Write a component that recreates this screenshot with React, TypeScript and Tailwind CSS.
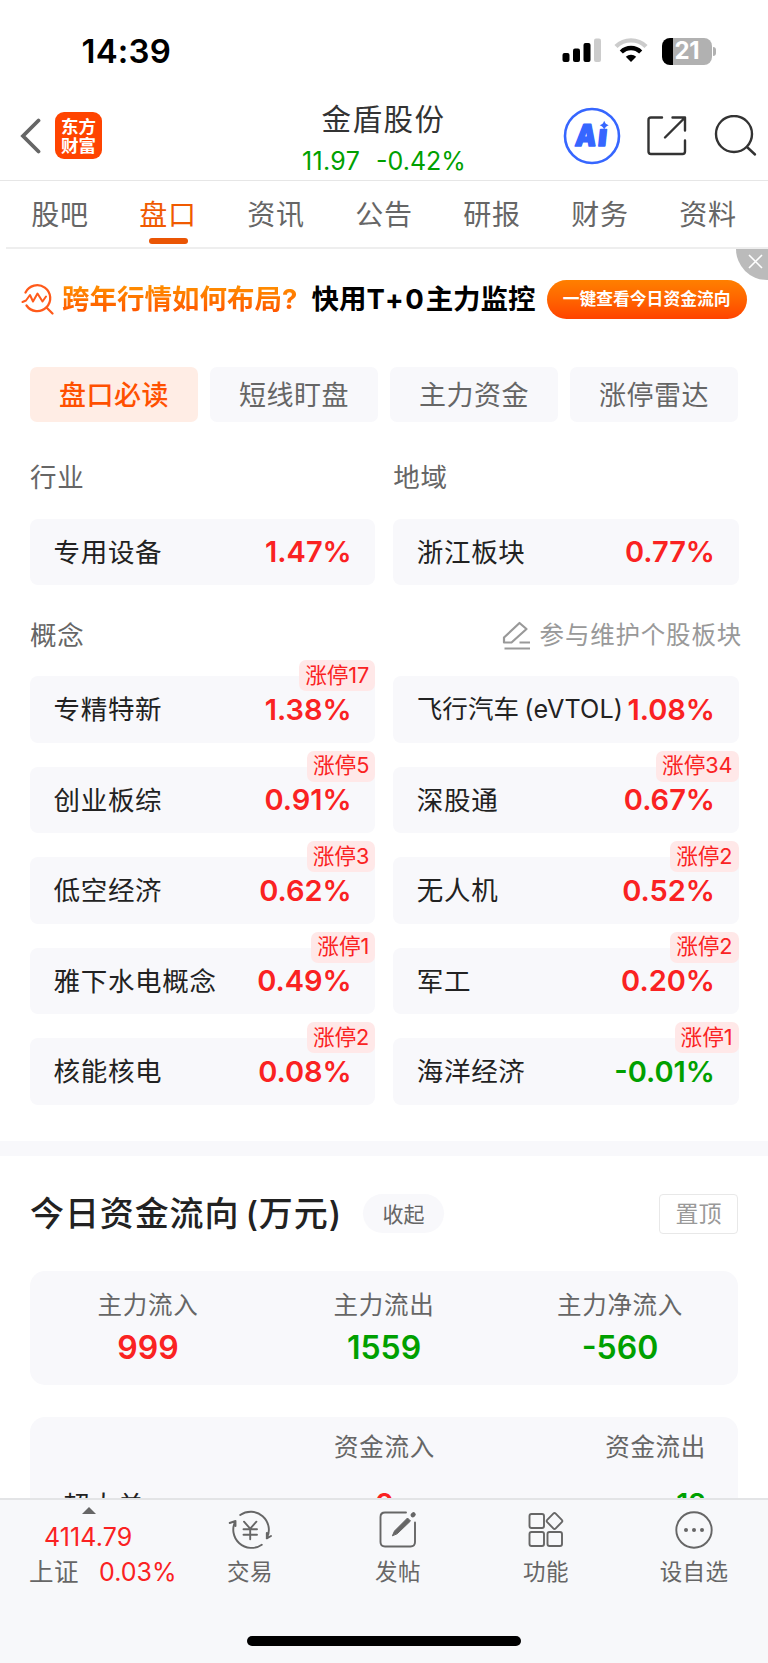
import type { ReactNode } from "react";
import clsx from "clsx";

const TABS = ["股吧", "盘口", "资讯", "公告", "研报", "财务", "资料"];
const FILTERS = ["盘口必读", "短线盯盘", "主力资金", "涨停雷达"];

interface Board {
    name: string;
    suffix?: string;
    change: string;
    limitUp?: number;
}

const CONCEPTS: Board[] = [
    { name: "专精特新", change: "1.38%", limitUp: 17 },
    { name: "飞行汽车", suffix: "(eVTOL)", change: "1.08%" },
    { name: "创业板综", change: "0.91%", limitUp: 5 },
    { name: "深股通", change: "0.67%", limitUp: 34 },
    { name: "低空经济", change: "0.62%", limitUp: 3 },
    { name: "无人机", change: "0.52%", limitUp: 2 },
    { name: "雅下水电概念", change: "0.49%", limitUp: 1 },
    { name: "军工", change: "0.20%", limitUp: 2 },
    { name: "核能核电", change: "0.08%", limitUp: 2 },
    { name: "海洋经济", change: "-0.01%", limitUp: 1 },
];

const FLOWS = [
    { label: "主力流入", value: "999", up: true },
    { label: "主力流出", value: "1559", up: false },
    { label: "主力净流入", value: "-560", up: false },
];

function StatusBar() {
    return (
        <div className="flex h-[102px] items-center justify-between pl-[81.5px] pr-[52px]">
            <span className="pt-[1px] text-[33px] font-semibold leading-none tracking-[0.2px] text-black">14:39</span>
            <div className="flex items-center">
                <svg width="40" height="26" viewBox="0 0 40 26">
                    <rect x="0.5" y="15" width="7" height="9" rx="2" fill="#000" />
                    <rect x="11" y="10.5" width="7" height="13.5" rx="2" fill="#000" />
                    <rect x="21.5" y="5" width="7" height="19" rx="2" fill="#000" />
                    <rect x="32" y="0.5" width="7" height="23.5" rx="2" fill="#ccc" />
                </svg>
                <svg className="ml-[12px]" width="34" height="26" viewBox="0 0 34 26" fill="none">
                    <path d="M2 8.5a21.5 21.5 0 0 1 30 0" stroke="#ccc" strokeWidth="4.4" />
                    <path d="M7.3 14a13.8 13.8 0 0 1 19.4 0" stroke="#000" strokeWidth="4.4" />
                    <path d="M17 24l-5.2-5.2a7.4 7.4 0 0 1 10.4 0z" fill="#000" />
                </svg>
                <div className="ml-[14px] flex items-center">
                    <div className="flex h-[27px] w-[50px] items-center justify-center rounded-[8px] bg-[linear-gradient(to_right,#000_11px,#b1b1b1_11px)]">
                        <span className="text-[24px] font-bold leading-none tracking-[-0.2px] text-white">21</span>
                    </div>
                    <div className="ml-[1px] h-[9px] w-[3px] rounded-r-full bg-[#b1b1b1]" />
                </div>
            </div>
        </div>
    );
}

function Header() {
    return (
        <header className="flex h-[79px] items-start border-b border-[#e6e6e6]">
            <div className="flex w-[250px] items-center pl-[20px] pt-[10px]">
                <svg width="21" height="36" viewBox="0 0 21 36" fill="none" stroke="#666" strokeWidth="3.8">
                    <path d="M18.5 2.5L3 18 18.5 33.5" strokeLinecap="round" />
                </svg>
                <div className="ml-[14px] flex h-[47px] w-[47px] flex-col items-center justify-center rounded-[9px] bg-[#ff4400] text-[17.5px] font-bold leading-[19px] text-white">
                    <span>东方</span>
                    <span>财富</span>
                </div>
            </div>
            <div className="flex w-[267px] flex-col items-center">
                <div className="text-[29.5px] leading-[34px] tracking-[1.5px] text-[#333]">金盾股份</div>
                <div className="mt-[11px] flex gap-[16px] pl-[1px] text-[25px] leading-[28px] text-[#00a000]">
                    <span className="tracking-[0.3px]">11.97</span>
                    <span>-0.42%</span>
                </div>
            </div>
            <div className="flex items-center pl-[46px] pt-[5px]">
                <svg width="58" height="58" viewBox="0 0 58 58">
                    <circle cx="29" cy="29" r="27" fill="none" stroke="#3666ff" strokeWidth="2.6" />
                    <g fill="#3666ff" stroke="#3666ff" strokeWidth="1.6" strokeLinejoin="round" fontFamily="Inter" fontWeight="900" fontSize="30" transform="skewX(-6)">
                        <text x="15.5" y="39" textLength="21" lengthAdjust="spacingAndGlyphs">A</text>
                        <text x="38.5" y="39.5">ı</text>
                    </g>
                    <path d="M41.2 13.8q1 3.5 4.5 4.5q-3.5 1-4.5 4.5q-1-3.5-4.5-4.5q3.5-1 4.5-4.5z" fill="#3666ff" />
                </svg>
                <svg className="ml-[25px]" width="42" height="42" viewBox="0 0 42 42" fill="none" stroke="#333" strokeWidth="2.4" strokeLinecap="round" strokeLinejoin="round">
                    <path d="M16 2.5H5Q2.5 2.5 2.5 5V36.500Q2.5 39 5 39H36.500Q39 39 39 36.500V25.500" />
                    <path d="M26.5 2.500H39V15.500M39 2.500L19 22.500" />
                </svg>
                <svg className="ml-[25.5px]" width="44" height="42" viewBox="0 0 44 42" fill="none" stroke="#333" strokeWidth="2.4" strokeLinecap="round">
                    <circle cx="20" cy="19" r="18" />
                    <path d="M33 32l8 7.5" />
                </svg>
            </div>
        </header>
    );
}

function Tabs() {
    return (
        <nav className="ml-[6px] flex h-[68px] border-b-2 border-[#eee]">
            {TABS.map((tab, i) => (
                <div
                    key={tab}
                    className={clsx("flex w-[108px] flex-col items-center", i === 1 ? "text-[#f05a00]" : "text-[#666]")}
                >
                    <span className="mt-[14px] text-[28px] leading-[40px] tracking-[0.8px]">{tab}</span>
                    {i === 1 && <span className="mt-[3px] h-[6px] w-[39px] rounded-[3px] bg-[#ea5504]" />}
                </div>
            ))}
        </nav>
    );
}

function Banner() {
    return (
        <div className="relative flex h-[100px] items-center pl-[20px]">
            <svg width="36" height="34" viewBox="0 0 36 34" fill="none" stroke="#ff5a1a" strokeWidth="2.3" strokeLinecap="round">
                <path d="M5.5 10.5A13 13 0 1 1 6.5 23.500M27 26l5.5 5.5" />
                <path d="M2.5 20l3.5-1.5 4-5.5 3 6.5 4.5-8 5 8 3.5-5" strokeWidth="2" strokeLinejoin="round" />
            </svg>
            <div className="ml-[6px] bg-gradient-to-b from-[#ff9500] to-[#ff4a00] bg-clip-text text-[27.5px] font-bold leading-[34px] text-transparent">
                跨年行情如何布局?
            </div>
            <div className="ml-[14px] whitespace-nowrap text-[27.5px] font-bold leading-[34px] text-black">
                快用<span className="tracking-[1.7px]">T+0</span>主力监控
            </div>
            <div className="ml-[11px] flex h-[39px] w-[200px] shrink-0 items-center justify-center rounded-full bg-gradient-to-b from-[#ff7f00] to-[#ff4200] text-[16.8px] font-bold leading-none text-white">
                一键查看今日资金流向
            </div>
            <div className="absolute right-0 top-0 flex h-[31px] w-[32px] items-center justify-center rounded-bl-full bg-[#bbb] pb-[6px] pl-[7px]">
                <svg width="15" height="15" viewBox="0 0 15 15" stroke="#fff" strokeWidth="1.6">
                    <path d="M1 1l13 13M14 1L1 14" />
                </svg>
            </div>
        </div>
    );
}

function BoardCard({ name, suffix, change, limitUp }: Board) {
    return (
        <div className="relative flex h-[66.5px] items-center justify-between rounded-[8px] bg-[#f8f8fb] pl-[23.5px] pr-[23.5px]">
            <span
                className={clsx(
                    "whitespace-nowrap leading-none text-[#222]",
                    suffix ? "text-[25.5px] tracking-[0.1px]" : "text-[26.5px] tracking-[0.7px]"
                )}
            >
                {name}
                {suffix && <span className="ml-[5px] text-[25.2px]">{suffix}</span>}
            </span>
            <span
                className={clsx(
                    "whitespace-nowrap text-[29px] font-semibold leading-none",
                    change.startsWith("-") ? "text-[#00a000]" : "text-[#fa2222]"
                )}
            >
                {change}
            </span>
            {limitUp !== undefined && (
                <span className="absolute -top-[16px] right-0 flex h-[31px] items-center rounded-[7px] bg-[#ffe8e8] px-[6px] text-[21.7px] leading-none tracking-[-0.1px] text-[#fa2222]">
                    涨停{limitUp}
                </span>
            )}
        </div>
    );
}

function Boards() {
    return (
        <section className="px-[30px]">
            <div className="mt-[17.5px] grid w-[708px] grid-cols-4 gap-[12px]">
                {FILTERS.map((f, i) => (
                    <div
                        key={f}
                        className={clsx(
                            "flex h-[55px] items-center justify-center rounded-[7px] pt-[3px] text-[27px] leading-none tracking-[0.5px]",
                            i === 0 ? "bg-[#ffede5] font-medium text-[#ff5000]" : "bg-[#f8f8fb] text-[#666]"
                        )}
                    >
                        {f}
                    </div>
                ))}
            </div>
            <div className="mt-[37px] grid w-[708.5px] grid-cols-2 gap-x-[18px] text-[26.5px] leading-[36px] tracking-[0.7px] text-[#666]">
                <span>行业</span>
                <span>地域</span>
            </div>
            <div className="mt-[24px] grid w-[708.5px] grid-cols-2 gap-x-[18px]">
                <BoardCard name="专用设备" change="1.47%" />
                <BoardCard name="浙江板块" change="0.77%" />
            </div>
            <div className="mt-[32px] flex h-[36px] w-[712px] items-center justify-between">
                <span className="text-[26.5px] leading-none tracking-[0.7px] text-[#666]">概念</span>
                <div className="flex items-center text-[24.5px] leading-none tracking-[0.8px] text-[#999]">
                    <svg className="mr-[9px]" width="29" height="29" viewBox="0 0 29 29" fill="none" stroke="#999" strokeWidth="2.2" strokeLinejoin="round">
                        <path d="M17.5 2L24.5 8 9.5 21.500H2V16.500z" />
                        <path d="M17.5 21.500H28M2.5 27.500H28" />
                    </svg>
                    参与维护个股板块
                </div>
            </div>
            <div className="mt-[23px] grid w-[708.5px] grid-cols-2 gap-x-[18px] gap-y-[24px]">
                {CONCEPTS.map((c) => (
                    <BoardCard key={c.name} {...c} />
                ))}
            </div>
        </section>
    );
}

function CapitalFlow() {
    return (
        <section className="px-[30px]">
            <div className="mt-[37.5px] flex h-[40px] items-center">
                <h2 className="whitespace-nowrap pt-[1px] text-[34px] font-medium leading-none tracking-[0.9px] text-[#222]">
                    今日资金流向<span className="ml-[6px]">(万元)</span>
                </h2>
                <span className="ml-[21px] flex h-[39px] w-[81px] items-center justify-center rounded-full bg-[#f8f8fb] pt-[1px] text-[21px] leading-none text-[#666]">
                    收起
                </span>
                <span className="ml-auto flex h-[40px] w-[79px] items-center justify-center rounded-[4px] border-[1.5px] border-[#e8e8e8] pt-[1px] text-[23px] leading-none text-[#999]">
                    置顶
                </span>
            </div>
            <div className="mt-[37px] grid h-[114px] grid-cols-3 rounded-[15px] bg-[#f8f8fb] pt-[16px] text-center">
                {FLOWS.map((f) => (
                    <div key={f.label}>
                        <div className="text-[24.5px] leading-[36px] tracking-[0.7px] text-[#666]">{f.label}</div>
                        <div className={clsx("mt-[5px] text-[32px] font-semibold leading-[40px]", f.up ? "text-[#fa2222]" : "text-[#00a000]")}>
                            {f.value}
                        </div>
                    </div>
                ))}
            </div>
            <div className="mt-[32px] h-[160px] rounded-[15px] bg-[#f8f8fb] pl-[33px] pr-[32px] pt-[12px]">
                <div className="flex justify-between text-[24.5px] leading-[36px] tracking-[0.7px] text-[#666]">
                    <span className="w-[214px]" />
                    <span className="w-[214px] text-center">资金流入</span>
                    <span className="w-[214px] text-right">资金流出</span>
                </div>
                {/* only the top of this row shows above the bottom bar */}
                <div className="mt-[14.5px] flex justify-between">
                    <span className="w-[214px] text-[26.5px] leading-[52px] tracking-[0.7px] text-[#222]">超大单</span>
                    <span className="w-[214px] text-center text-[28.5px] font-semibold leading-[49px] text-[#fa2222]">0</span>
                    <span className="w-[214px] text-right text-[28.5px] font-semibold leading-[49px] text-[#00a000]">12</span>
                </div>
            </div>
        </section>
    );
}

function NavItem({ label, children }: { label: string; children: ReactNode }) {
    return (
        <div className="flex w-[148px] flex-col items-center pt-[8px]">
            <svg width="44" height="44" viewBox="0 0 44 44" fill="none" stroke="#666" strokeWidth="1.9" strokeLinecap="round" strokeLinejoin="round">
                {children}
            </svg>
            <span className="mt-[4px] text-[22.5px] leading-[32px] tracking-[0.4px] text-[#666]">{label}</span>
        </div>
    );
}

function BottomBar() {
    return (
        <footer className="flex h-[165px] flex-col border-t-2 border-[#e3e4e6] bg-[#f7f8fa]">
            <div className="flex">
                <div className="flex w-[176px] flex-col items-start pl-[29px]">
                    <svg className="ml-[52.5px] mt-[7px]" width="14" height="7" viewBox="0 0 14 7">
                        <path d="M7 0l7 7H0z" fill="#666" />
                    </svg>
                    <span className="ml-[15px] mt-[8px] text-[25px] leading-[30px] tracking-[0.1px] text-[#fa2222]">4114.79</span>
                    <div className="mt-[4px] flex items-center whitespace-nowrap leading-[32px]">
                        <span className="w-[70px] text-[24.5px] tracking-[0.5px] text-[#666]">上证</span>
                        <span className="text-[25px] text-[#fa2222]">0.03%</span>
                    </div>
                </div>
                <NavItem label="交易">
                    <path d="M12.2 7A18.2 18.2 0 0 1 38.8 30.3L43 28M38.8 30.3V25" />
                    <path d="M33.8 36.7A18.2 18.2 0 0 1 7.5 13L1.7 15M7.5 13V18" />
                    <path d="M16 13.7l6.2 7 6.2-7M22.2 20.7v10.6M15.5 21.3h13.5M15.5 26.7h13.5" />
                </NavItem>
                <NavItem label="发帖">
                    <path d="M30 4.5H9Q4.5 4.5 4.5 9V34Q4.5 38.5 9 38.5H34.5Q39 38.5 39 34V14.5" />
                    <path d="M16.5 27.5L18.5 23 31.5 10 34.5 13 21.5 25.5z" fill="#666" strokeWidth="1" />
                    <path d="M36.8 7.2L37.5 6.5" strokeWidth="4.5" />
                </NavItem>
                <NavItem label="功能">
                    <rect x="5.5" y="6" width="14.5" height="14" rx="2" />
                    <rect x="5.5" y="24" width="14.5" height="14" rx="2" />
                    <rect x="23.5" y="24" width="14.5" height="14" rx="2" />
                    <path d="M29.3 5.7Q30.5 4.5 31.7 5.7L37.8 11.8Q39 13 37.8 14.2L31.7 20.3Q30.5 21.5 29.3 20.3L23.2 14.2Q22 13 23.2 11.8z" />
                </NavItem>
                <NavItem label="设自选">
                    <circle cx="22" cy="22" r="17.7" />
                    <g fill="#666" stroke="none">
                        <circle cx="14" cy="22" r="2" />
                        <circle cx="22" cy="22" r="2" />
                        <circle cx="30" cy="22" r="2" />
                    </g>
                </NavItem>
            </div>
            <div className="mb-[17px] mt-auto h-[10px] w-[274px] self-center rounded-full bg-black" />
        </footer>
    );
}

export default function App() {
    return (
        <div className="flex h-[1663px] w-[768px] flex-col overflow-hidden bg-white font-[Inter,'Noto_Sans_CJK_SC',sans-serif]">
            <main className="h-[1498px] shrink-0 overflow-hidden">
                <StatusBar />
                <Header />
                <Tabs />
                <Banner />
                <Boards />
                <div className="mt-[36px] h-[15.5px] bg-[#f8f8fb]" />
                <CapitalFlow />
            </main>
            <BottomBar />
        </div>
    );
}
